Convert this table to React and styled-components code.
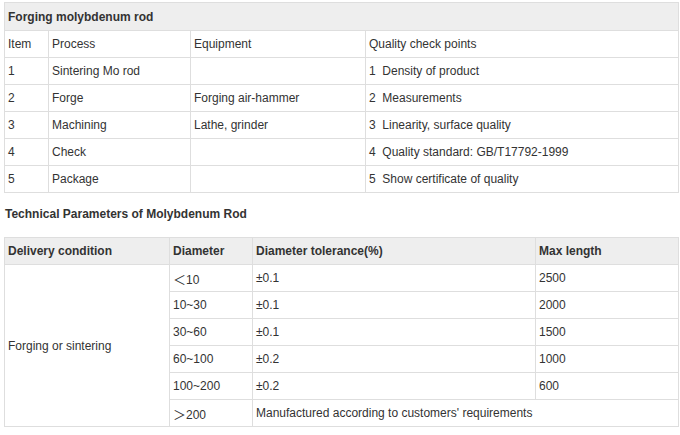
import React from "react";
import styled, { createGlobalStyle } from "styled-components";

const GlobalStyle = createGlobalStyle`
  body {
    margin: 0;
    background: #fff;
    font-family: "Liberation Sans", Arial, sans-serif;
    font-size: 12px;
    color: #333;
  }
`;

const Page = styled.div`
  padding: 2px 2px 0 4px;
  width: 674px;
`;

const Table = styled.table`
  width: 674px;
  border-collapse: collapse;
  table-layout: fixed;
  border-top: 1px solid #cfcfcf;
`;

const Cell = styled.td`
  border: 1px solid #dedede;
  height: ${({ $h }) => $h || 26}px;
  padding: 0 0 0 3px;
  vertical-align: middle;
  font-weight: ${({ $bold }) => ($bold ? "bold" : "normal")};
  background: ${({ $head }) => ($head ? "#eeeeee" : "#fff")};
  white-space: pre;
`;

const Caption = styled.div`
  font-weight: bold;
  font-size: 12px;
  padding: 14px 0 0 1px;
  height: 30px;
  box-sizing: border-box;
  margin-bottom: 14px;
`;

const Glyph = styled.span`
  font-family: "Noto Sans CJK SC", sans-serif;
  font-size: 13px;
`;

const steps = [
  ["1", "Sintering Mo rod", "", "1  Density of product"],
  ["2", "Forge", "Forging air-hammer", "2  Measurements"],
  ["3", "Machining", "Lathe, grinder", "3  Linearity, surface quality"],
  ["4", "Check", "", "4  Quality standard: GB/T17792-1999"],
  ["5", "Package", "", "5  Show certificate of quality"],
];

const params = [
  [<><Glyph>＜</Glyph>10</>, "±0.1", "2500"],
  ["10~30", "±0.1", "2000"],
  ["30~60", "±0.1", "1500"],
  ["60~100", "±0.2", "1000"],
  ["100~200", "±0.2", "600"],
];

export default function App() {
  return (
    <Page>
      <GlobalStyle />
      <Table>
        <colgroup>
          <col style={{ width: 44 }} />
          <col style={{ width: 142 }} />
          <col style={{ width: 175 }} />
          <col style={{ width: 313 }} />
        </colgroup>
        <tbody>
          <tr>
            <Cell colSpan={4} $head $bold $h={27}>
              Forging molybdenum rod
            </Cell>
          </tr>
          <tr>
            <Cell>Item</Cell>
            <Cell>Process</Cell>
            <Cell>Equipment</Cell>
            <Cell>Quality check points</Cell>
          </tr>
          {steps.map((r) => (
            <tr key={r[0]}>
              {r.map((c, i) => (
                <Cell key={i}>{c}</Cell>
              ))}
            </tr>
          ))}
        </tbody>
      </Table>
      <Caption>Technical Parameters of Molybdenum Rod</Caption>
      <Table>
        <colgroup>
          <col style={{ width: 165 }} />
          <col style={{ width: 83 }} />
          <col style={{ width: 283 }} />
          <col style={{ width: 143 }} />
        </colgroup>
        <tbody>
          <tr>
            <Cell $head $bold $h={26}>Delivery condition</Cell>
            <Cell $head $bold $h={26}>Diameter</Cell>
            <Cell $head $bold $h={26}>Diameter tolerance(%)</Cell>
            <Cell $head $bold $h={26}>Max length</Cell>
          </tr>
          {params.map((r, idx) => (
            <tr key={idx}>
              {idx === 0 && <Cell rowSpan={6}>Forging or sintering</Cell>}
              {r.map((c, i) => (
                <Cell key={i}>{c}</Cell>
              ))}
            </tr>
          ))}
          <tr>
            <Cell><Glyph>＞</Glyph>200</Cell>
            <Cell colSpan={2}>Manufactured according to customers' requirements</Cell>
          </tr>
        </tbody>
      </Table>
    </Page>
  );
}
